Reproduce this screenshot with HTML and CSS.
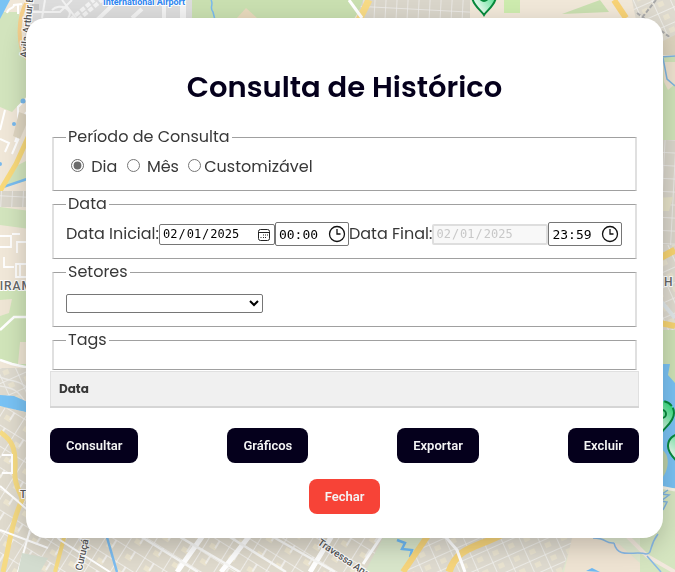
FILE: index.html
```html
<!DOCTYPE html>
<html lang="pt-BR">
<head>
<meta charset="utf-8">
<meta name="viewport" content="width=device-width, initial-scale=1">
<title>Consulta de Histórico</title>
<link rel="stylesheet" href="styles.css">
</head>
<body>
<svg class="map" viewBox="0 0 675 572" preserveAspectRatio="xMidYMid slice" aria-hidden="true">
  <defs>
    <pattern id="blocks" width="22" height="18" patternUnits="userSpaceOnUse" patternTransform="rotate(32)">
      <rect width="22" height="18" fill="#dfdacd"/>
      <rect x="5" y="6" width="7" height="5" fill="#ece5d0"/>
      <path d="M0 0H22M0 0V18M11 0V9" stroke="#f5f4f2" stroke-width="1.6" fill="none"/>
    </pattern>
    <pattern id="grid" width="11" height="13" patternUnits="userSpaceOnUse" patternTransform="rotate(3)">
      <rect width="11" height="13" fill="#d9d5ca"/>
      <path d="M0 0H11M0 0V13" stroke="#efeeec" stroke-width="1.5" fill="none"/>
    </pattern>
    <pattern id="tilted" width="17" height="14" patternUnits="userSpaceOnUse" patternTransform="rotate(-24)">
      <rect width="17" height="14" fill="#dedacf"/>
      <rect x="4" y="4" width="6" height="5" fill="#e9e3d0"/>
      <path d="M0 0H17M0 0V14" stroke="#f3f2f0" stroke-width="1.5" fill="none"/>
    </pattern>
    <linearGradient id="pinFill" x1="0" y1="1" x2="1" y2="0">
      <stop offset="0.3" stop-color="#d8f7e4"/>
      <stop offset="1" stop-color="#0fd466"/>
    </linearGradient>
    <g id="pin">
      <path d="M0 17C-3 12-12 7-12-2A12 12 0 0 1 12-2C12 7 3 12 0 17Z" fill="url(#pinFill)" stroke="#078a3c" stroke-width="2" stroke-dasharray="42 2 9 2"/>
      <circle cy="-1" r="4" fill="#7deaa8" stroke="#078a3c" stroke-width="2"/>
    </g>
  </defs>

  <rect width="675" height="572" fill="#f0e7d8"/>

  <!-- north edge: airport, park and suburbs -->
  <path d="M25 0H193V40H25Z" fill="#dcdcdc"/>
  <g stroke="#f2f2f2" fill="none">
    <path d="M28 12H60L72 0M45 0L42 18M52 10C60 2 75 10 68 18M62 0L76 18" stroke-width="2"/>
    <path d="M70 20L94 0M78 20L102 0" stroke-width="4" stroke-dasharray="5 2"/>
    <path d="M97 20L118 0M164 0V20M132 18L142 9" stroke-width="4"/>
    <path d="M183 0V20" stroke-width="6"/>
  </g>
  <path d="M32 4H39V10H32Z" fill="#c5c5c5"/>
  <path d="M192 0H366L352 22H192Z" fill="#c9dfb0"/>
  <path d="M236 19L246 8L257 18Z" fill="#e7d9bc"/>
  <path d="M211 0C214 4 209 8 213 12L215 20" stroke="#79b9ec" stroke-width="1.5" fill="none"/>
  <path d="M363 0H470V22H355Z" fill="url(#grid)"/>
  <path d="M369 0L359 20" stroke="#f7da85" stroke-width="7"/>
  <path d="M349 0L362 18" stroke="#fff" stroke-width="3"/>
  <path d="M504 0H520V13H504Z" fill="#cdebae"/>
  <path d="M562 14L600 0L609 12Z" fill="#c9dfb0"/>
  <path d="M632 0H675V54L640 40Z" fill="url(#tilted)"/>
  <path d="M614 0L626 18" stroke="#f7d276" stroke-width="6"/>
  <path d="M656 0L637 24M637 13L675 41" stroke="#a9a9a9" stroke-width="2" stroke-dasharray="4 2" fill="none"/>

  <!-- west edge -->
  <path d="M0 12H19L23 66L27 82L12 112L0 107Z" fill="#d2e4bd"/>
  <path d="M0 0H10L0 19Z" fill="#79c3f4"/>
  <path d="M28 0C16 18 18 48 27 60" stroke="#f4cf8c" stroke-width="4" fill="none"/>
  <path d="M7 13C8 7 14 9 14 5L22 4M18 4V14" stroke="#fff" stroke-width="2" fill="none"/>
  <path d="M19 50L27 62V96L12 112Z" fill="#d2e4bd"/>
  <path d="M30 95L18 107V120M5 110L0 130M30 112L12 154M26 112L15 142M0 139L9 143L5 152M30 130L20 155" stroke="#fff" stroke-width="2" fill="none"/>
  <path d="M19 112L30 116L20 139L13 136Z" fill="#ded5c1"/>
  <circle cx="23" cy="101" r="2.5" fill="#79b9ec"/>
  <circle cx="14" cy="124" r="2" fill="#79b9ec"/>
  <circle cx="0" cy="164" r="2" fill="#79b9ec"/>
  <path d="M30 159V180L5 186L18 165Z" fill="#d2e4bd"/>
  <path d="M0 188L30 178" stroke="#79bdf0" stroke-width="2.5"/>
  <path d="M30 133L16 164L0 191" stroke="#f8d97b" stroke-width="5" fill="none"/>
  <path d="M0 191H30V207H0Z" fill="url(#grid)"/>
  <path d="M0 207L30 211V229L0 225Z" fill="#d2e4bd"/>
  <path d="M0 236H11V247H0M12 234H20M30 242H17V253M4 257V267H14M30 264H16V277H28M20 264V276" stroke="#fff" stroke-width="1.8" fill="none"/>
  <path d="M0 291L30 287V368L0 361Z" fill="#d0e4b9"/>
  <path d="M0 300L12 299L9 313L0 316ZM20 342H30V364H18Z" fill="#eee5d4"/>
  <path d="M0 330L14 317H30M0 360L12 364L30 368" stroke="#fff" stroke-width="2.5" fill="none"/>
  <path d="M0 368H40V430H0Z" fill="url(#tilted)"/>
  <path d="M0 377C12 382 18 379 30 390M0 386C14 388 18 390 28 406" stroke="#ecebe7" stroke-width="1.5" fill="none"/>
  <path d="M0 395L14 396L30 403V413L0 406Z" fill="#78c2f4"/>

  <!-- south-west city blocks -->
  <path d="M0 407L30 413V510H300V572H0Z" fill="url(#blocks)"/>
  <path d="M0 432C12 440 16 448 15 469C13 486 22 493 22 500C12 521 9 546 3 572" stroke="#f5da83" stroke-width="5" fill="none"/>
  <path d="M65 534L55 572" stroke="#f5da83" stroke-width="4"/>
  <path d="M2 455H12V473H2M0 486L30 512L60 540L110 572M30 530L18 572M0 530L48 548" stroke="#fff" stroke-width="2" fill="none"/>
  <path d="M22 553L48 558L40 572H18Z" fill="#d3dccf"/>
  <path d="M106 534L117 572" stroke="#7bbcf0" stroke-width="2.5"/>

  <!-- south edge -->
  <path d="M118 530H390V572H118Z" fill="url(#blocks)"/>
  <path d="M204 534L177 572M251 534L221 572M333 534L310 572" stroke="#fff" stroke-width="5"/>
  <path d="M140 536L198 572M175 534L240 572M225 534L286 572M268 534L335 572" stroke="#f7f7f5" stroke-width="2.5"/>
  <path d="M385 534H426L400 572H365Z" fill="#d8e5ca"/>
  <path d="M397 540L405 543L402 549L412 550L410 557" fill="none" stroke="#6eb8f2" stroke-width="2.5"/>
  <path d="M426 534H580L563 572H400Z" fill="url(#tilted)"/>
  <path d="M429 534L403 572" stroke="#f5d47c" stroke-width="6"/>
  <path d="M505 533C475 549 458 546 449 572" stroke="#f5d47c" stroke-width="7" fill="none"/>
  <path d="M443 534L457 550L465 572M383 534L363 564" stroke="#fff" stroke-width="3" fill="none"/>
  <path d="M575 534H675V572H562Z" fill="#dfe8cf"/>
  <path d="M573 534L619 544L650 572H564Z" fill="#eee3d2"/>
  <path d="M593 538C608 538 604 544 614 543" stroke="#89b9e6" stroke-width="1.5" fill="none"/>
  <path d="M586 571L592 568L600 572Z" fill="#6eb8f2"/>

  <!-- east edge -->
  <path d="M655 45L675 35V55H655Z" fill="#ddd4be"/>
  <path d="M655 56H675V140H655Z" fill="#cfe2b8"/>
  <path d="M663 62H675V84L668 90L664 82Z" fill="#eee2cf"/>
  <path d="M660 57L675 56M663 58L667 79L675 86" stroke="#7fb4df" stroke-width="1.5" fill="none"/>
  <path d="M655 140H675V245H655Z" fill="url(#grid)"/>
  <path d="M655 198L673 197L669 211H655Z" fill="#e5e1c7"/>
  <path d="M655 245H675V330H655Z" fill="url(#tilted)"/>
  <path d="M660 258L675 250" stroke="#f6d372" stroke-width="7"/>
  <path d="M655 294L675 318" stroke="#dfe6e8" stroke-width="4"/>
  <path d="M660 323L675 326" stroke="#f6d372" stroke-width="6"/>
  <path d="M655 330H675V490H655Z" fill="#cde0b5"/>
  <path d="M655 364H670L668 375L675 383V488H655Z" fill="#79c1f2"/>
  <path d="M655 447C674 450 668 473 661 479H655Z" fill="#bdcfa7"/>
  <path d="M655 488L675 490V572H640V530Z" fill="#d5e5c0"/>
  <path d="M660 487L675 490" stroke="#f7f3e8" stroke-width="3"/>
  <path d="M668 490L662 494L669 495L661 501L667 502L663 510" stroke="#7fb4df" stroke-width="1.5" fill="none"/>
  <path d="M625 534L647 556L675 572" stroke="#f2e8dd" stroke-width="4" fill="none"/>
  <path d="M614 543C618 560 635 550 646 554C653 554 648 547 658 534M647 556L661 572" stroke="#89b9e6" stroke-width="1.5" fill="none"/>

  <g class="map-labels">
    <text class="map-airport" x="103" y="5">International Airport</text>
    <text transform="translate(27 58) rotate(-84)">Avila Arthur Bernardes</text>
    <text class="map-area" x="-9" y="290">PIRAMA</text>
    <text x="20" y="498">Tv</text>
    <text transform="translate(82 571) rotate(-78)">Curuçá</text>
    <text transform="translate(317 544) rotate(34)">Travessa Angustura</text>
    <text class="map-area" x="664" y="286">H</text>
  </g>
  <use href="#pin" x="484" y="-2"/>
  <use href="#pin" x="662" y="415"/>
  <use href="#pin" x="680" y="448"/>
</svg>

<main class="modal">
  <h1 class="title">Consulta de Histórico</h1>

  <form class="query">
    <fieldset class="group">
      <legend>Período de Consulta</legend>
      <input type="radio" id="dia" name="periodo" checked>
      <label for="dia">Dia</label>
      <input type="radio" id="mes" name="periodo">
      <label for="mes">Mês</label>
      <input type="radio" id="custom" name="periodo"><label for="custom">Customizável</label>
    </fieldset>

    <fieldset class="group">
      <legend>Data</legend>
      <div class="range">
        <label for="data-inicial">Data Inicial:</label>
        <span class="date-field">
          <input class="date" type="date" id="data-inicial" value="2025-02-01">
          <svg class="calendar" viewBox="0 0 12 12" aria-hidden="true"><rect x="0.5" y="0.5" width="11" height="11" rx="2"/><path d="M0.5 3.5H11.5M5 6H6M7 6H8M9 6H10M2.500 8.500H3.500M5 8.500H6M7 8.500H8"/></svg>
        </span>
        <span class="time-field">
          <input class="time" type="text" value="00:00" aria-label="Hora inicial">
          <svg class="clock" viewBox="0 0 18 18" aria-hidden="true"><circle cx="9" cy="9" r="7.5"/><path d="M9 4V9H12.5"/></svg>
        </span>
        <label for="data-final">Data Final:</label>
        <span class="date-field">
          <input class="date" type="date" id="data-final" value="2025-02-01" disabled>
        </span>
        <span class="time-field">
          <input class="time" type="text" value="23:59" aria-label="Hora final">
          <svg class="clock" viewBox="0 0 18 18" aria-hidden="true"><circle cx="9" cy="9" r="7.5"/><path d="M9 4V9H12.5"/></svg>
        </span>
      </div>
    </fieldset>

    <fieldset class="group">
      <legend>Setores</legend>
      <select class="sector" aria-label="Setores"><option></option></select>
    </fieldset>

    <fieldset class="group">
      <legend>Tags</legend>
    </fieldset>

    <table class="results">
      <thead><tr><th scope="col">Data</th></tr></thead>
    </table>

    <div class="actions">
      <button class="button" type="button">Consultar</button>
      <button class="button" type="button">Gráficos</button>
      <button class="button" type="button">Exportar</button>
      <button class="button" type="button">Excluir</button>
    </div>
    <div class="closing">
      <button class="button button-close" type="button">Fechar</button>
    </div>
  </form>
</main>
</body>
</html>
```
FILE: styles.css
```css
* {
  box-sizing: border-box;
}

body {
  margin: 0;
  padding: 18px 12px 34px 26px;
  color: #383838;
  font: 16px/24px Poppins, Inter, sans-serif;
}

.map {
  position: fixed;
  inset: 0;
  z-index: -1;
  width: 100%;
  height: 100%;
}

.map-labels {
  fill: #555;
  stroke: #fff;
  stroke-width: 2px;
  paint-order: stroke;
  font: 500 10px Roboto, sans-serif;
}

.map-labels .map-airport {
  fill: #2f86f0;
  font-size: 9px;
  font-weight: 700;
}

.map-labels .map-area {
  fill: #666;
  font-size: 12px;
  letter-spacing: 1px;
}

.modal {
  padding: 48px 24px 24px;
  border-radius: 20px;
  background: #fff;
  box-shadow: 0 8px 24px rgba(0, 0, 0, 0.2);
}

.title {
  margin: 0 0 17px;
  color: #05001c;
  font-size: 29px;
  font-weight: 600;
  line-height: 42px;
  text-align: center;
}

.group {
  min-width: 0;
  margin: 0 2px 1px;
  padding: 6px 12px 11px;
  border: solid #a0a0a0;
  border-width: 1px 2px;
  border-left-color: #e0e0e0;
  border-right-color: #e0e0e0;
}

.group legend {
  padding: 0 2px;
}

.group input[type="radio"] {
  width: 13px;
  height: 13px;
  margin: 3px 3px 0 5px;
  accent-color: #6b6b6b;
}

.range {
  display: flex;
  flex-wrap: wrap;
  align-items: center;
  padding-bottom: 1px;
}

.date,
.time {
  display: block;
  width: 100%;
  border: 1px solid #767676;
  border-radius: 2px;
  background: #fff;
  color: #000;
  font: 13px "DejaVu Sans Mono", monospace;
}

.date-field {
  position: relative;
  width: 116px;
}

.date {
  height: 21px;
  padding: 0 2px;
  font-size: 12px;
}

.date::-webkit-calendar-picker-indicator {
  opacity: 0;
}

.date:disabled {
  padding: 0 1px;
  border: 2px solid #dedede;
  background: #f8f8f8;
  color: #c8c8c8;
}

.calendar {
  position: absolute;
  top: 5px;
  right: 5px;
  width: 12px;
  height: 12px;
  fill: none;
  stroke: #222;
  pointer-events: none;
}

.time-field {
  position: relative;
  width: 74px;
}

.time {
  height: 24px;
  padding: 0 24px 0 3px;
}

.clock {
  position: absolute;
  top: 3px;
  right: 3px;
  width: 18px;
  height: 18px;
  fill: none;
  stroke: #111;
  stroke-width: 1.3;
}

.sector {
  display: block;
  width: 197px;
  max-width: 100%;
  height: 19px;
  margin: 4px 0 2px;
  border: 1px solid #767676;
  border-radius: 2px;
  background: #fff;
}

.results {
  width: 100%;
  border-collapse: collapse;
  background: #f0f0f0;
}

.results th {
  padding: 8px;
  border: 1px solid #e0e0e0;
  border-bottom: 2px solid #d5d5d5;
  font-size: 12px;
  font-weight: 700;
  line-height: 18px;
  text-align: left;
}

.actions {
  display: flex;
  flex-wrap: wrap;
  justify-content: space-between;
  gap: 16px;
  margin-top: 20px;
}

.closing {
  display: flex;
  justify-content: center;
  margin-top: 16px;
}

.button {
  padding: 10px 16px;
  border: 0;
  border-radius: 8px;
  background: #05001c;
  color: #f4f4f4;
  font: 600 13px/15px Roboto, sans-serif;
}

.button-close {
  background: #f74337;
}
```
